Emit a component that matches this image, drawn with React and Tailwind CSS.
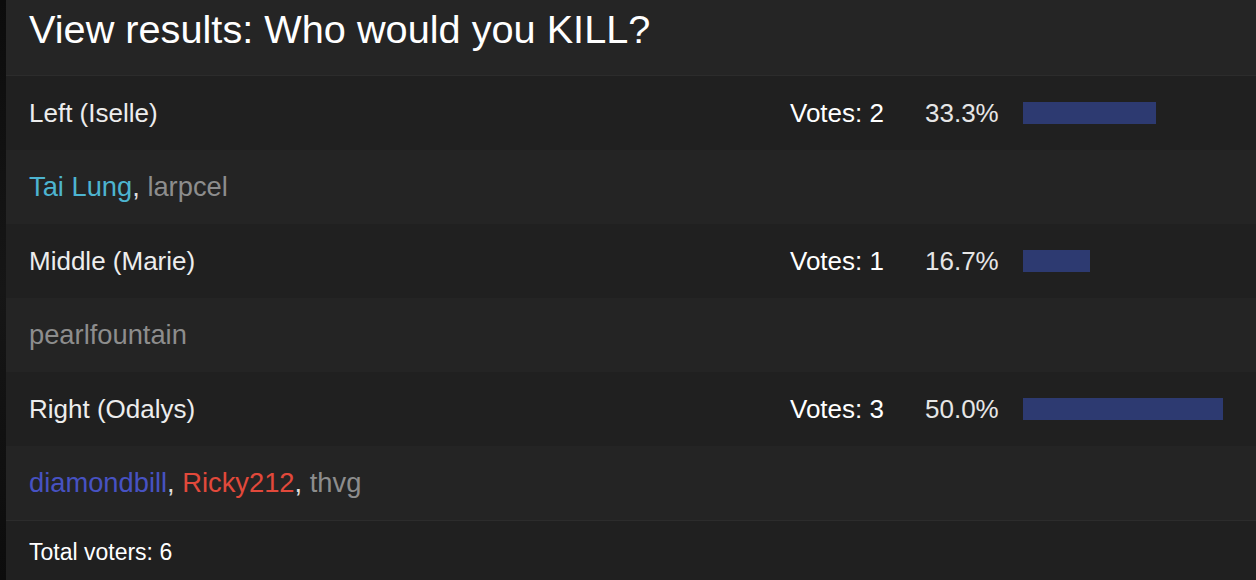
import React from 'react';

const options = [
  {
    label: 'Left (Iselle)',
    votes: 2,
    voters: [
      {name: 'Tai Lung', color: 'text-[#4db4d0]'},
      {name: 'larpcel', color: 'text-[#8d8d8d]'},
    ],
  },
  {
    label: 'Middle (Marie)',
    votes: 1,
    voters: [{name: 'pearlfountain', color: 'text-[#8d8d8d]'}],
  },
  {
    label: 'Right (Odalys)',
    votes: 3,
    voters: [
      {name: 'diamondbill', color: 'text-[#4752c2]'},
      {name: 'Ricky212', color: 'text-[#e2493b]'},
      {name: 'thvg', color: 'text-[#8d8d8d]'},
    ],
  },
];

const total = options.reduce((sum, o) => sum + o.votes, 0);
const maxVotes = Math.max(...options.map((o) => o.votes));

export default function App() {
  return (
    <div
      className="flex h-[580px] w-[1256px] overflow-hidden bg-[#202020]"
      style={{fontFamily: '"Liberation Sans", Arial, sans-serif'}}
    >
      {/* dark strip on the left edge */}
      <div className="w-[6px] shrink-0 bg-gradient-to-b from-[#0c0c0c] via-[#161616] to-[#0c0c0c]" />

      <div className="flex flex-1 flex-col">
        <div className="h-[76px] border-b border-[#2c2c2c] bg-[#252525] pl-[23px] pt-[7px]">
          <h1 className="text-[39.7px] leading-[45px] text-white">View results: Who would you KILL?</h1>
        </div>

        {options.map((opt) => {
          const pct = ((opt.votes / total) * 100).toFixed(1);
          return (
            <React.Fragment key={opt.label}>
              <div className="flex h-[74px] items-center bg-[#202020] pl-[23px] pr-[33px] text-[26px] text-[#ededed]">
                <span className="flex-1">{opt.label}</span>
                <span className="w-[98px] text-white">Votes: {opt.votes}</span>
                <span className="ml-[37px] w-[78px] text-[#e6e6e6]">{pct}%</span>
                <div className="ml-[20px] w-[200px]">
                  <div
                    className="h-[22px] bg-[#2d3a71]"
                    style={{width: `${(opt.votes / maxVotes) * 100}%`}}
                  />
                </div>
              </div>
              <div className="flex h-[74px] items-center bg-[#242424] pl-[23px] text-[27.3px] text-[#e0e0e0]">
                <span>
                  {opt.voters.map((v, i) => (
                    <React.Fragment key={v.name}>
                      <span className={v.color}>{v.name}</span>
                      {i < opt.voters.length - 1 ? ', ' : ''}
                    </React.Fragment>
                  ))}
                </span>
              </div>
            </React.Fragment>
          );
        })}

        <div className="flex flex-1 items-center border-t border-[#2c2c2c] bg-[#202020] pl-[23px] pt-[4px] text-[23px] text-white">
          Total voters: {total}
        </div>
      </div>
    </div>
  );
}
